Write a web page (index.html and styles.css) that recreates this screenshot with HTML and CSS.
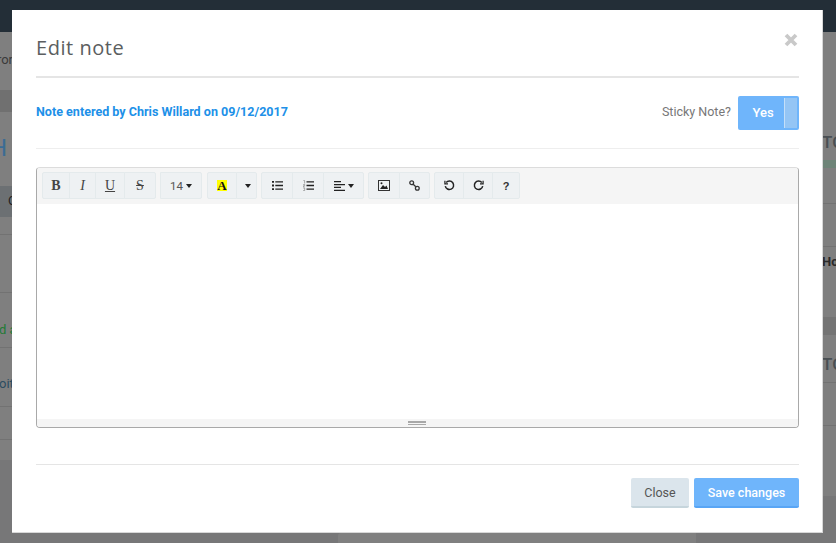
FILE: index.html
```html
<!DOCTYPE html>
<html lang="en">
<head>
<meta charset="utf-8">
<title>Edit note</title>
<link rel="stylesheet" href="styles.css">
</head>
<body>
<div class="backdrop">
  <div class="topbar"></div>
  <div class="side side-left">
    <div class="lrow l1"><span class="frag frag-or">ror</span></div>
    <div class="lrow l2"></div>
    <div class="lrow l3"><span class="frag frag-h">H</span></div>
    <div class="lrow l4"><span class="frag frag-c">C</span></div>
    <div class="lrow l5"></div>
    <div class="lrow l6"></div>
    <div class="lrow l7"><span class="frag frag-green">d a</span></div>
    <div class="lrow l8"><span class="frag frag-oit">oit</span></div>
    <div class="lrow l9"></div>
    <div class="lrow l10"></div>
  </div>
  <div class="side side-right">
    <div class="rrow r1"><span class="frag frag-to">TO</span></div>
    <div class="rrow r2"></div>
    <div class="rrow r3"></div>
    <div class="rrow r4"><span class="frag frag-ho">Ho</span></div>
    <div class="rrow r5"></div>
    <div class="rrow r6"><span class="frag frag-to">TO</span></div>
    <div class="rrow r7"></div>
    <div class="rrow r8"></div>
  </div>
  <div class="bottom-mid"></div>
</div>

<div class="modal">
  <header class="modal-head">
    <h1 class="modal-title">Edit note</h1>
    <button class="close" aria-label="Close">
      <svg width="14" height="14" viewBox="0 0 14 14"><path d="M2 2l10 10M12 2L2 12" stroke="#c9c9c9" stroke-width="3.800" fill="none"/></svg>
    </button>
  </header>

  <div class="meta-row">
    <span class="note-by">Note entered by Chris Willard on 09/12/2017</span>
    <div class="sticky">
      <span class="sticky-label">Sticky Note?</span>
      <div class="toggle"><span class="toggle-text">Yes</span><span class="toggle-handle"></span></div>
    </div>
  </div>

  <div class="editor">
    <div class="toolbar">
      <div class="group">
        <button class="tb w28 serif bold">B</button>
        <button class="tb w26 serif italic">I</button>
        <button class="tb w29 serif under">U</button>
        <button class="tb w31 serif strike">S</button>
      </div>
      <div class="group">
        <button class="tb w42 size">14<i class="caret"></i></button>
      </div>
      <div class="group group-color">
        <button class="tb w30 serif bold"><span class="hilite">A</span></button>
        <button class="tb w20"><i class="caret"></i></button>
      </div>
      <div class="group">
        <button class="tb w31"><svg width="11" height="9" viewBox="0 0 11 9"><path d="M0 0h2v1.800H0zM0 3.600h2v1.800H0zM0 7.200h2V9H0zM3.300 .2H11v1.400H3.300zM3.300 3.800H11v1.400H3.300zM3.300 7.400H11v1.400H3.300z" fill="#222"/></svg></button>
        <button class="tb w31"><svg width="11" height="11" viewBox="0 0 11 11"><path d="M3.500 1.200H11v1.400H3.500zM3.500 4.800H11v1.400H3.500zM3.500 8.400H11v1.400H3.500z" fill="#222"/><path d="M.4 .5h1.200v3M.2 4.500h1.500v1.200H.5v1.200h1.300M.2 8h1.500v2.500H.2" stroke="#777" stroke-width=".6" fill="none"/></svg></button>
        <button class="tb w41"><svg width="11" height="10" viewBox="0 0 11 10"><path d="M0 0h7v1.300H0zM0 2.900h11v1.300H0zM0 5.800h7v1.300H0zM0 8.700h11V10H0z" fill="#222"/></svg><i class="caret"></i></button>
      </div>
      <div class="group">
        <button class="tb w32"><svg width="12" height="11" viewBox="0 0 12 11"><rect x=".5" y=".5" width="11" height="10" fill="none" stroke="#333"/><path d="M2 9l3-4 2 2 1.500-1.500L10 9z" fill="#222"/><circle cx="3.500" cy="3.300" r="1" fill="#222"/></svg></button>
        <button class="tb w31b"><svg width="11" height="11" viewBox="0 0 11 11" fill="none" stroke="#333" stroke-width="1.300"><circle cx="2.700" cy="2.700" r="1.900"/><circle cx="8.300" cy="8.300" r="1.900"/><path d="M4.200 4.200l2.600 2.600"/></svg></button>
      </div>
      <div class="group">
        <button class="tb w30"><svg width="11" height="11" viewBox="0 0 11 11" fill="none" stroke="#222" stroke-width="1.500"><path d="M2.200 2.600a4.200 4.200 0 1 1-.9 3.500"/><path d="M.9.700v3.100H4" stroke-width="1.200"/></svg></button>
        <button class="tb w29"><svg width="11" height="11" viewBox="0 0 11 11" fill="none" stroke="#222" stroke-width="1.500"><path d="M8.800 2.600a4.200 4.200 0 1 0 .9 3.500"/><path d="M10.100.7v3.100H7" stroke-width="1.200"/></svg></button>
        <button class="tb w27b help">?</button>
      </div>
    </div>
    <div class="edit-area"></div>
    <div class="resizer"><span class="grip"></span></div>
  </div>

  <footer class="modal-foot">
    <button class="btn btn-close">Close</button>
    <button class="btn btn-save">Save changes</button>
  </footer>
</div>
</body>
</html>
```
FILE: styles.css
```css
* { box-sizing: border-box; }
html, body { margin: 0; padding: 0; height: 100%; overflow: hidden; }
body { font-family: Roboto, "Liberation Sans", sans-serif; background: #7f7f7f; }

.backdrop { position: absolute; inset: 0; overflow: hidden; background: #777778; }
.topbar { height: 32px; background: #232e37; }
.side { position: absolute; top: 32px; overflow: hidden; }
.side-left { left: 0; width: 12px; }
.side-right { right: 0; width: 14px; }
.bottom-mid { position: absolute; left: 338px; width: 358px; top: 533px; height: 10px; background: #808080; border-radius: 3px 0 0 0; }

.lrow, .rrow { background: #7f7f7f; border-bottom: 1px solid #727272; position: relative; overflow: hidden; }
.l1 { height: 58px; border-bottom: 0; }
.l2 { height: 22px; background: #707070; border-bottom: 0; }
.l3 { height: 74px; border-bottom: 0; }
.l4 { height: 31px; background: #6c7073; border-bottom: 0; }
.l5 { height: 18px; }
.l6 { height: 58px; }
.l7 { height: 55px; }
.l8 { height: 59px; }
.l9 { height: 33px; }
.l10 { height: 20px; border-bottom: 0; }

.r1 { height: 128px; border-bottom: 0; }
.r2 { height: 44px; border-top: 8px solid #6e8478; }
.r3 { height: 43px; }
.r4 { height: 70px; border-bottom: 0; }
.r5 { height: 18px; background: #747474; border-bottom: 0; }
.r6 { height: 48px; }
.r7 { height: 43px; }
.r8 { height: 70px; border-bottom: 0; }

.frag { position: absolute; white-space: nowrap; font-size: 13px; color: #333; }
.frag-or { right: -1px; top: 20px; color: #3a3a3a; }
.frag-h { left: -10px; top: 22px; font-size: 24px; color: #3b6c94; }
.frag-c { left: 8px; top: 7px; color: #222; }
.frag-green { left: -1px; top: 29px; color: #1f7a35; }
.frag-oit { left: -1px; top: 28px; color: #2d4c61; }
.frag-to { left: 0; font-size: 17px; font-weight: 500; color: #4a4f53; }
.r1 .frag-to { top: 100px; }
.r6 .frag-to { top: 19px; }
.frag-ho { left: 0; top: 7px; font-weight: 700; color: #2a2a2a; }

.modal {
  position: absolute; left: 12px; top: 10px; width: 811px; height: 523px;
  background: #fff; border: 1px solid #d8d8d8; border-width: 0 1px 1px 0;
  padding: 0 23px 0 24px; display: flex; flex-direction: column;
}
.modal-head { height: 68px; border-bottom: 2px solid #e5e5e5; position: relative; }
.modal-title { margin: 0; padding-top: 24px; font: 400 20px/28px "Open Sans", sans-serif; letter-spacing: .55px; color: #5b5e60; }
.close { position: absolute; right: 1px; top: 23px; padding: 0; border: 0; background: none; display: block; height: 14px; }

.meta-row { height: 71px; padding-top: 18px; border-bottom: 1px solid #eeeeee; display: flex; justify-content: space-between; align-items: flex-start; }
.note-by { font-size: 12.550px; font-weight: 700; line-height: 32px; color: #2090e8; }
.sticky { display: flex; align-items: center; gap: 7px; }
.sticky-label { font-size: 12.500px; color: #777; position: relative; top: -2px; }
.toggle { width: 61px; height: 34px; background: #6fb5fb; border-radius: 2px; padding: 2px; display: flex; }
.toggle-text { flex: 1; text-align: center; color: #fff; font-size: 13px; font-weight: 500; line-height: 30px; padding-left: 2px; }
.toggle-handle { width: 13px; background: #94c5f5; border-left: 1px solid #c4dff9; }

.editor { margin-top: 18px; height: 261px; border: 1px solid #a9a9a9; border-top-color: #dcdcdc; border-radius: 4px; display: flex; flex-direction: column; overflow: hidden; }
.toolbar { height: 36px; background: #f5f5f5; padding: 4px 0 0 5px; display: flex; gap: 4px; }
.group { display: flex; height: 27px; }
.group-color { margin-left: 1px; }
.tb { height: 27px; padding: 0; background: #eef1f3; border: 1px solid #e4eaec; margin-left: -1px; display: flex; align-items: center; justify-content: center; color: #444; font: 400 12px Roboto, sans-serif; }
.group .tb:first-child { margin-left: 0; border-radius: 2px 0 0 2px; }
.group .tb:last-child { border-radius: 0 2px 2px 0; }
.w20 { width: 21px; } .w26 { width: 27px; } .w28 { width: 28px; } .w29 { width: 30px; }
.w30 { width: 30px; } .w31 { width: 32px; } .w32 { width: 32px; } .w41 { width: 41px; } .w42 { width: 42px; }
.w31b { width: 31px; } .w27b { width: 28px; }
.serif { font: 400 14px "Liberation Serif", serif; color: #444; }
.bold { font-weight: 700; }
.italic { font-style: italic; }
.under { text-decoration: underline; }
.strike { text-decoration: line-through; }
.size { color: #555; font-size: 11.500px; }
.hilite { background: #ff0; color: #111; line-height: 11px; padding: 0; font-weight: 700; font-size: 13px; }
.help { font: 700 11px "Liberation Sans", sans-serif; color: #333; }
.caret { display: inline-block; width: 0; height: 0; margin-left: 3px; border-left: 3.500px solid transparent; border-right: 3.500px solid transparent; border-top: 4px solid #222; }

.edit-area { flex: 1; background: #fff; }
.resizer { height: 8px; background: #f5f5f5; display: flex; justify-content: center; padding-top: 2px; }
.grip { width: 18px; height: 4px; border-top: 2px solid #a8a8a8; border-bottom: 1px solid #a8a8a8; margin-left: -1px; }

.modal-foot { margin-top: 36px; border-top: 1px solid #e5e5e5; padding-top: 13px; display: flex; justify-content: flex-end; gap: 5px; }
.btn { height: 30px; padding: 0; border: 0; border-radius: 2px; font: 400 12.500px Roboto, sans-serif; }
.btn-close { width: 58px; background: #dbe5ec; border-bottom: 2px solid #c6d5dc; color: #555; }
.btn-save { width: 105px; background: #6fb5fb; border-bottom: 2px solid #58a5f5; color: #fff; font-weight: 500; }
```
